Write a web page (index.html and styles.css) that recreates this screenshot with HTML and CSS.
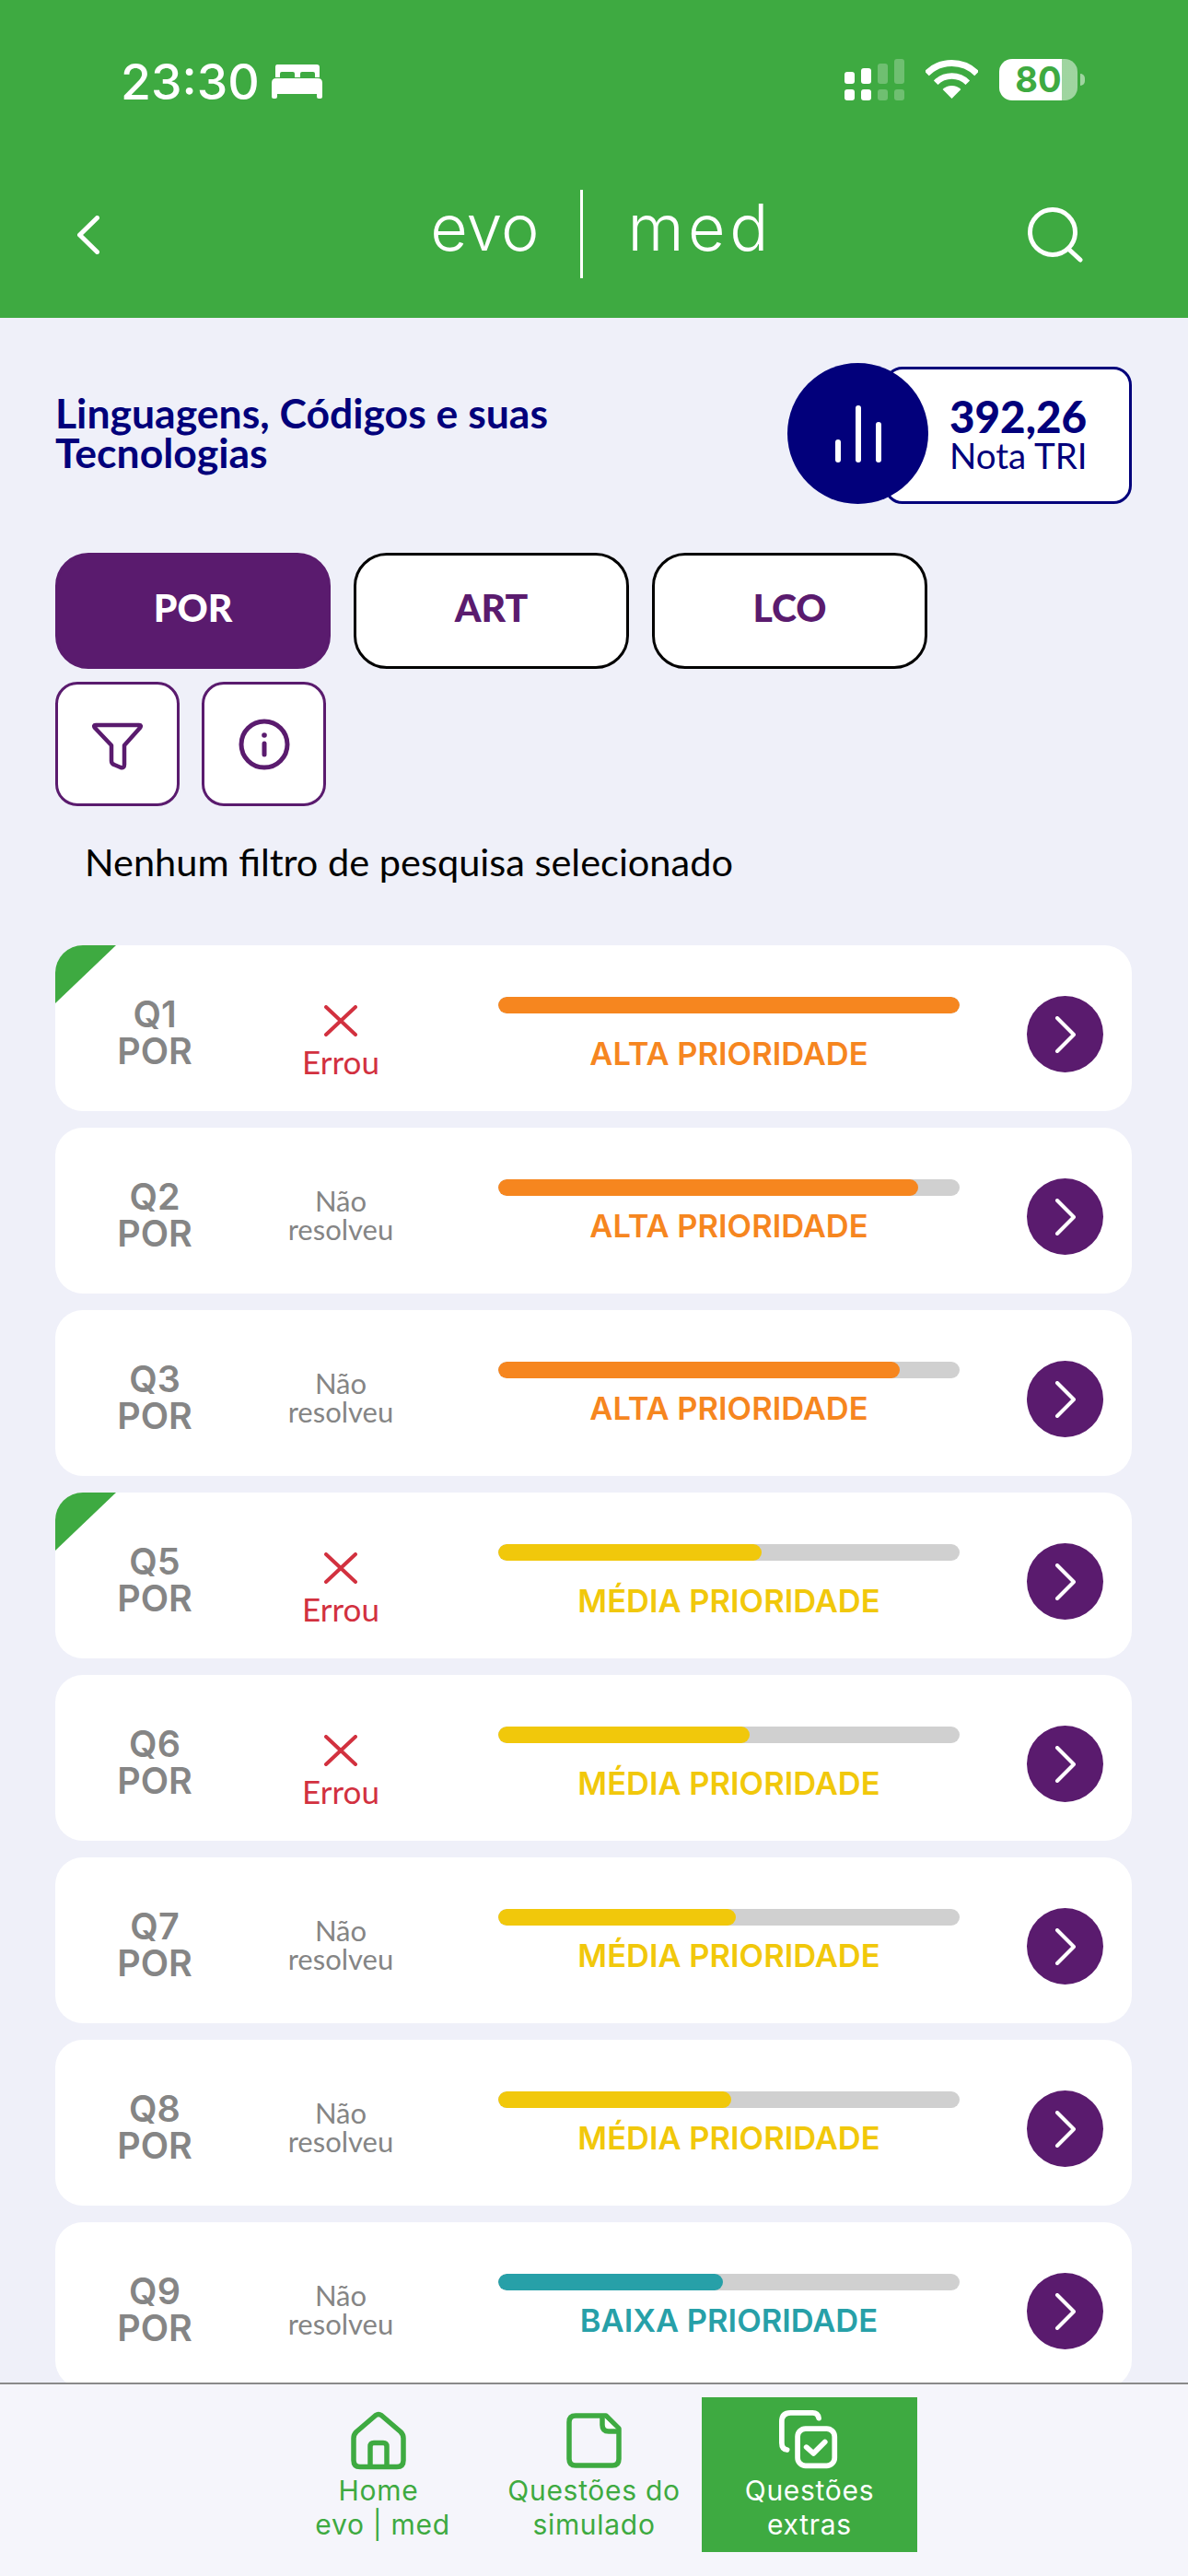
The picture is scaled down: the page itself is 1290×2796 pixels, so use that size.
FILE: index.html
```html
<!DOCTYPE html>
<html lang="pt-BR">
<head>
    <meta charset="UTF-8">
    <title>Questões extras</title>
    <link rel="stylesheet" href="styles.css">
</head>
<body>
    <header class="top">
        <div class="status">
            <div class="status-left">
                <span class="time">23:30</span>
                <svg class="bed" viewBox="0 0 55 37" fill="#fff"><path d="M6 0H49Q52 0 52 3V14H47V10Q47 8 45 8H33Q31 8 31 10V14H25V10Q25 8 23 8H11Q9 8 9 10V14H4V3Q4 0 6 0ZM5 15H50Q55 15 55 20V35Q55 37 53 37H51Q49 37 49 35V32H6V35Q6 37 4 37H2Q0 37 0 35V20Q0 15 5 15Z"/></svg>
            </div>
            <div class="status-right">
                <div class="signal">
                    <div class="signal-col"><i class="sig-top h13"></i><i class="sig-bot"></i></div>
                    <div class="signal-col"><i class="sig-top h17"></i><i class="sig-bot"></i></div>
                    <div class="signal-col dim"><i class="sig-top h22"></i><i class="sig-bot"></i></div>
                    <div class="signal-col dim"><i class="sig-top h27"></i><i class="sig-bot"></i></div>
                </div>
                <svg class="wifi" viewBox="0 0 57 42" fill="none" stroke="#fff"><path stroke-width="7" d="M1.3 14.8A38.5 38.5 0 0 1 55.7 14.8"/><path stroke-width="6.5" d="M11.2 24.7A24.5 24.5 0 0 1 45.8 24.7"/><path fill="#fff" stroke="none" d="M28.5 42L18.6 32A14 14 0 0 1 38.4 32Z"/></svg>
                <div class="battery">80</div>
            </div>
        </div>
        <div class="nav">
            <svg class="back" viewBox="0 0 24 42" fill="none" stroke="#fff" stroke-width="5" stroke-linecap="round" stroke-linejoin="round"><path d="M21.5 2.5L2.5 21L21.5 39.5"/></svg>
            <div class="logo"><span class="logo-evo">evo</span><i class="logo-bar"></i><span class="logo-med">med</span></div>
            <svg class="search" viewBox="0 0 60 60" fill="none" stroke="#fff" stroke-width="5" stroke-linecap="round"><circle cx="27" cy="27" r="24.5"/><path d="M44 45L57 57"/></svg>
        </div>
    </header>

    <main class="content">
        <section class="intro">
            <h1 class="title">Linguagens, Códigos e suas<br>Tecnologias</h1>
            <div class="tri">
                <div class="tri-circle">
                    <i class="tri-bar b1"></i><i class="tri-bar b2"></i><i class="tri-bar b3"></i>
                </div>
                <div class="tri-box">
                    <strong>392,26</strong>
                    <span>Nota TRI</span>
                </div>
            </div>
        </section>

        <div class="tabs">
            <button class="tab active">POR</button>
            <button class="tab">ART</button>
            <button class="tab">LCO</button>
        </div>

        <div class="tools">
            <button class="tool">
                <svg class="filter-icon" viewBox="0 0 55 52" fill="none" stroke="#5a1b6e" stroke-width="4.5" stroke-linejoin="round"><path d="M4 3H51Q54 3 52 6L35 25V46Q35 50 31 49L24 46Q21 45 21 42V25L3 6Q1 3 4 3Z"/></svg>
            </button>
            <button class="tool">
                <svg class="info-icon" viewBox="0 0 56 56" fill="none" stroke="#5a1b6e" stroke-width="5" stroke-linecap="round"><circle cx="28" cy="28" r="25"/><path d="M28 27V39"/><circle cx="28" cy="18" r="2.8" fill="#5a1b6e" stroke="none"/></svg>
            </button>
        </div>

        <p class="note">Nenhum filtro de pesquisa selecionado</p>

        <div class="list">
            <article class="card erro marked">
                <div class="q">Q1<br>POR</div>
                <div class="state wrong">
                    <svg class="x" viewBox="0 0 36 34" fill="none" stroke="#d2313f" stroke-width="4" stroke-linecap="round"><path d="M2 2L34 32M34 2L2 32"/></svg>
                    <span>Errou</span>
                </div>
                <div class="prio alta">
                    <div class="track"><div class="fill" style="width: 100%"></div></div>
                    <div class="prio-label">ALTA PRIORIDADE</div>
                </div>
                <div class="go"><svg viewBox="0 0 24 40" fill="none" stroke="#fff" stroke-width="4" stroke-linecap="round" stroke-linejoin="round"><path d="M3 2L21 20L3 38"/></svg></div>
            </article>

            <article class="card">
                <div class="q">Q2<br>POR</div>
                <div class="state"><span>Não<br>resolveu</span></div>
                <div class="prio alta">
                    <div class="track"><div class="fill" style="width: 91%"></div></div>
                    <div class="prio-label">ALTA PRIORIDADE</div>
                </div>
                <div class="go"><svg viewBox="0 0 24 40" fill="none" stroke="#fff" stroke-width="4" stroke-linecap="round" stroke-linejoin="round"><path d="M3 2L21 20L3 38"/></svg></div>
            </article>

            <article class="card">
                <div class="q">Q3<br>POR</div>
                <div class="state"><span>Não<br>resolveu</span></div>
                <div class="prio alta">
                    <div class="track"><div class="fill" style="width: 87%"></div></div>
                    <div class="prio-label">ALTA PRIORIDADE</div>
                </div>
                <div class="go"><svg viewBox="0 0 24 40" fill="none" stroke="#fff" stroke-width="4" stroke-linecap="round" stroke-linejoin="round"><path d="M3 2L21 20L3 38"/></svg></div>
            </article>

            <article class="card erro marked">
                <div class="q">Q5<br>POR</div>
                <div class="state wrong">
                    <svg class="x" viewBox="0 0 36 34" fill="none" stroke="#d2313f" stroke-width="4" stroke-linecap="round"><path d="M2 2L34 32M34 2L2 32"/></svg>
                    <span>Errou</span>
                </div>
                <div class="prio media">
                    <div class="track"><div class="fill" style="width: 57%"></div></div>
                    <div class="prio-label">MÉDIA PRIORIDADE</div>
                </div>
                <div class="go"><svg viewBox="0 0 24 40" fill="none" stroke="#fff" stroke-width="4" stroke-linecap="round" stroke-linejoin="round"><path d="M3 2L21 20L3 38"/></svg></div>
            </article>

            <article class="card erro">
                <div class="q">Q6<br>POR</div>
                <div class="state wrong">
                    <svg class="x" viewBox="0 0 36 34" fill="none" stroke="#d2313f" stroke-width="4" stroke-linecap="round"><path d="M2 2L34 32M34 2L2 32"/></svg>
                    <span>Errou</span>
                </div>
                <div class="prio media">
                    <div class="track"><div class="fill" style="width: 54.5%"></div></div>
                    <div class="prio-label">MÉDIA PRIORIDADE</div>
                </div>
                <div class="go"><svg viewBox="0 0 24 40" fill="none" stroke="#fff" stroke-width="4" stroke-linecap="round" stroke-linejoin="round"><path d="M3 2L21 20L3 38"/></svg></div>
            </article>

            <article class="card">
                <div class="q">Q7<br>POR</div>
                <div class="state"><span>Não<br>resolveu</span></div>
                <div class="prio media">
                    <div class="track"><div class="fill" style="width: 51.5%"></div></div>
                    <div class="prio-label">MÉDIA PRIORIDADE</div>
                </div>
                <div class="go"><svg viewBox="0 0 24 40" fill="none" stroke="#fff" stroke-width="4" stroke-linecap="round" stroke-linejoin="round"><path d="M3 2L21 20L3 38"/></svg></div>
            </article>

            <article class="card">
                <div class="q">Q8<br>POR</div>
                <div class="state"><span>Não<br>resolveu</span></div>
                <div class="prio media">
                    <div class="track"><div class="fill" style="width: 50.5%"></div></div>
                    <div class="prio-label">MÉDIA PRIORIDADE</div>
                </div>
                <div class="go"><svg viewBox="0 0 24 40" fill="none" stroke="#fff" stroke-width="4" stroke-linecap="round" stroke-linejoin="round"><path d="M3 2L21 20L3 38"/></svg></div>
            </article>

            <article class="card">
                <div class="q">Q9<br>POR</div>
                <div class="state"><span>Não<br>resolveu</span></div>
                <div class="prio baixa">
                    <div class="track"><div class="fill" style="width: 48.7%"></div></div>
                    <div class="prio-label">BAIXA PRIORIDADE</div>
                </div>
                <div class="go"><svg viewBox="0 0 24 40" fill="none" stroke="#fff" stroke-width="4" stroke-linecap="round" stroke-linejoin="round"><path d="M3 2L21 20L3 38"/></svg></div>
            </article>
        </div>
    </main>

    <nav class="tabbar">
        <a class="nav-item">
            <svg class="nav-icon home" viewBox="0 0 60 63" fill="none" stroke="#3eaa41" stroke-width="5.5" stroke-linejoin="round"><path d="M27 4Q30 2 33 4L54 22Q57 25 57 29V53Q57 60 50 60H10Q3 60 3 53V29Q3 25 6 22Z"/><path d="M21 60V38Q21 34 25 34H35Q39 34 39 38V60"/></svg>
            <span>Home<br>&nbsp;evo | med</span>
        </a>
        <a class="nav-item">
            <svg class="nav-icon doc" viewBox="0 0 60 60" fill="none" stroke="#3eaa41" stroke-width="5.5" stroke-linejoin="round"><path d="M10 3H43L57 17V50Q57 57 50 57H10Q3 57 3 50V10Q3 3 10 3Z"/><path fill="#fff" d="M39 3V13Q39 20 46 20H57"/></svg>
            <span>Questões do<br>simulado</span>
        </a>
        <a class="nav-item active">
            <svg class="nav-icon copy" viewBox="0 0 69 69" fill="none" stroke="#fff" stroke-width="6" stroke-linecap="round" stroke-linejoin="round"><path d="M45 9Q44 3 38 3H13Q3 3 3 13V37Q3 44 9 45"/><rect x="21" y="21" width="42" height="42" rx="9"/><path d="M31 42L39 49L52 36"/></svg>
            <span>Questões<br>extras</span>
        </a>
    </nav>
</body>
</html>
```

FILE: styles.css
```css
* {
    box-sizing: border-box;
}

html,
body {
    margin: 0;
    padding: 0;
}

body {
    width: 1290px;
    height: 2796px;
    display: flex;
    flex-direction: column;
    overflow: hidden;
    background-color: #eff0f9;
    font-family: Lato, "Noto Sans", sans-serif;
}

/* header */
.top {
    height: 345px;
    flex: none;
    background-color: #3eaa41;
    color: #fff;
}

.status {
    display: flex;
    justify-content: space-between;
    padding: 64px 120px 0 131px;
    height: 206px;
}

.status-left {
    display: flex;
    align-items: flex-start;
}

.time {
    font-family: Inter, sans-serif;
    font-weight: 500;
    font-size: 53.5px;
    line-height: 50px;
}

.bed {
    width: 55px;
    height: 37px;
    margin: 6px 0 0 13px;
}

.status-right {
    display: flex;
    align-items: flex-start;
}

.signal {
    display: flex;
    gap: 7px;
}

.signal-col {
    width: 11px;
    height: 45px;
    display: flex;
    flex-direction: column;
    justify-content: flex-end;
    gap: 6px;
}

.signal-col.dim {
    opacity: 0.25;
}

.signal-col i {
    display: block;
    background-color: #fff;
    border-radius: 3px;
}

.sig-bot {
    height: 12px;
}

.h13 {
    height: 13px;
}

.h17 {
    height: 17px;
}

.h22 {
    height: 22px;
}

.h27 {
    height: 27px;
}

.wifi {
    width: 57px;
    height: 42px;
    margin: 1px 0 0 23px;
}

.battery {
    position: relative;
    width: 85px;
    height: 45px;
    margin-left: 23px;
    border-radius: 14px;
    background: linear-gradient(to right, #fff 80%, rgba(255, 255, 255, 0.5) 80%);
    color: #3eaa41;
    font-family: Inter, sans-serif;
    font-weight: 700;
    font-size: 38px;
    line-height: 45px;
    text-align: center;
}

.battery::after {
    content: "";
    position: absolute;
    left: 88px;
    top: 16px;
    width: 5px;
    height: 13px;
    border-radius: 0 5px 5px 0;
    background-color: rgba(255, 255, 255, 0.5);
}

.nav {
    position: relative;
    height: 96px;
    display: flex;
    align-items: center;
    justify-content: space-between;
    padding: 0 114px 0 84px;
}

.back {
    width: 24px;
    height: 42px;
    margin-top: 2px;
}

.search {
    width: 60px;
    height: 60px;
    margin-top: 2px;
}

.logo {
    display: flex;
    align-items: center;
    margin-left: 82px;
    font-family: Inter, sans-serif;
    font-weight: 300;
    font-size: 70px;
    line-height: 96px;
}

.logo-evo {
    margin: 0 45px 14px 0;
}

.logo-med {
    margin: 0 0 14px 48px;
    letter-spacing: 4.5px;
}

.logo-bar {
    display: block;
    width: 3px;
    height: 96px;
    background-color: #fff;
}

/* intro */
.content {
    flex: 1;
    min-height: 0;
    overflow: hidden;
    padding: 49px 61px 0 60px;
}

.intro {
    display: flex;
    justify-content: space-between;
    align-items: center;
}

.title {
    margin: 0 0 4px;
    color: #02007b;
    font-weight: 700;
    font-size: 44.5px;
    line-height: 43px;
}

.tri {
    display: flex;
    align-items: center;
}

.tri-circle {
    position: relative;
    z-index: 1;
    width: 153px;
    height: 153px;
    margin-right: -48px;
    display: flex;
    align-items: flex-end;
    justify-content: center;
    gap: 16px;
    padding-bottom: 45px;
    border-radius: 50%;
    background-color: #02007b;
}

.tri-bar {
    display: block;
    width: 6px;
    background-color: #fff;
    border-radius: 3px;
}

.b1 {
    height: 25px;
}

.b2 {
    height: 62px;
}

.b3 {
    height: 44px;
}

.tri-box {
    width: 269px;
    height: 149px;
    margin-top: 4px;
    display: flex;
    flex-direction: column;
    justify-content: center;
    padding: 0 0 5px 68px;
    border: 3px solid #02007b;
    border-radius: 20px;
    background-color: #fff;
    color: #02007b;
}

.tri-box strong {
    font-size: 47.5px;
    font-weight: 900;
    line-height: 48px;
}

.tri-box span {
    font-size: 38.5px;
    line-height: 36px;
}

/* filters */
.tabs {
    display: flex;
    gap: 25px;
    margin-top: 53px;
}

.tab {
    width: 299px;
    height: 126px;
    padding: 0 0 8px;
    border: 3px solid #000;
    border-radius: 36px;
    background-color: #fff;
    color: #5a1b6e;
    font-family: Lato, sans-serif;
    font-weight: 900;
    font-size: 41px;
}

.tab.active {
    background-color: #5a1b6e;
    border-color: #5a1b6e;
    color: #fff;
}

.tools {
    display: flex;
    gap: 24px;
    margin-top: 14px;
}

.tool {
    width: 135px;
    height: 135px;
    padding: 0;
    display: flex;
    align-items: center;
    justify-content: center;
    border: 3px solid #5a1b6e;
    border-radius: 24px;
    background-color: #fff;
}

.filter-icon {
    width: 55px;
    height: 52px;
    margin-top: 4px;
}

.info-icon {
    width: 56px;
    height: 56px;
}

.note {
    margin: 37px 0 0 32px;
    color: #000;
    font-size: 41.5px;
    line-height: 46px;
}

/* question cards */
.list {
    display: flex;
    flex-direction: column;
    gap: 18px;
    margin-top: 68px;
}

.card {
    position: relative;
    flex: none;
    height: 180px;
    display: flex;
    align-items: flex-start;
    overflow: hidden;
    border-radius: 30px;
    background-color: #fff;
}

.card.marked::before {
    content: "";
    position: absolute;
    left: 0;
    top: 0;
    width: 66px;
    height: 63px;
    background-color: #3eaa41;
    clip-path: polygon(0 0, 100% 0, 0 100%);
}

.q {
    width: 216px;
    padding-top: 55px;
    color: #858585;
    font-family: Inter, sans-serif;
    font-weight: 600;
    font-size: 39.5px;
    line-height: 40px;
    text-align: center;
}

.state {
    width: 188px;
    padding-top: 64px;
    display: flex;
    flex-direction: column;
    align-items: center;
    color: #858585;
    font-size: 31px;
    line-height: 31px;
    text-align: center;
}

.state.wrong {
    padding-top: 65px;
    color: #d2313f;
    font-size: 35px;
}

.x {
    width: 36px;
    height: 34px;
    margin-bottom: 12px;
}

.prio {
    width: 501px;
    margin-left: 77px;
    padding-top: 56px;
}

.track {
    height: 18px;
    border-radius: 9px;
    background-color: #d0d0d0;
    overflow: hidden;
}

.fill {
    height: 100%;
    border-radius: 9px;
}

.prio-label {
    margin-top: 15px;
    text-align: center;
    font-family: Inter, sans-serif;
    font-weight: 600;
    font-size: 34.5px;
    line-height: 36px;
}

.erro .prio-label {
    margin-top: 26px;
}

.alta .fill {
    background-color: #f6861f;
}

.alta .prio-label {
    color: #f6861f;
}

.media .fill {
    background-color: #f1c80b;
}

.media .prio-label {
    color: #f1c80b;
}

.baixa .fill {
    background-color: #27a0a8;
}

.baixa .prio-label {
    color: #27a0a8;
}

.go {
    width: 83px;
    height: 83px;
    margin: 55px 0 0 73px;
    display: flex;
    align-items: center;
    justify-content: center;
    border-radius: 50%;
    background-color: #5a1b6e;
}

.go svg {
    width: 24px;
    height: 40px;
}

/* bottom bar */
.tabbar {
    flex: none;
    height: 210px;
    display: flex;
    justify-content: center;
    padding: 14px 0 26px;
    border-top: 2px solid #8a8a8a;
    background-color: #f5f5fb;
}

.nav-item {
    width: 234px;
    height: 168px;
    padding-top: 14px;
    display: flex;
    flex-direction: column;
    align-items: center;
    color: #3eaa41;
    font-family: Inter, sans-serif;
    font-size: 30px;
    line-height: 37px;
    letter-spacing: 0.7px;
    text-align: center;
}

.nav-item.active {
    background-color: #3eaa41;
    color: #fff;
}

.nav-icon {
    flex: none;
    height: 66px;
    margin-bottom: 3px;
}

.home {
    width: 60px;
}

.doc {
    width: 60px;
}

.copy {
    width: 66px;
}
```
